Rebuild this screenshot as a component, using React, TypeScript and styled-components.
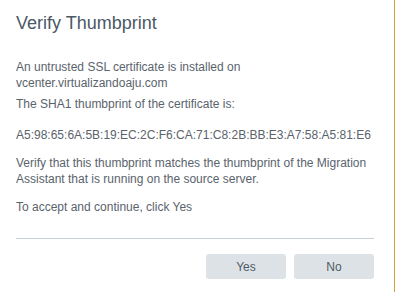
import React from "react";
import styled, { createGlobalStyle } from "styled-components";

const Global = createGlobalStyle`
  html, body { margin: 0; padding: 0; background: #ffffff; }
  body { font-family: "Liberation Sans", Arial, sans-serif; }
`;

const Dialog = styled.div`
  box-sizing: border-box;
  width: 395px;
  height: 292px;
  border-right: 1px solid #d2a03c;
  padding: 12px 20px 0 16px;
  display: flex;
  flex-direction: column;
  background: #fff;
`;

const Title = styled.h1`
  margin: 0;
  font-size: 18px;
  line-height: 22px;
  font-weight: normal;
  color: #4a5866;
`;

const Body = styled.div`
  margin-top: 25px;
  font-size: 12px;
  line-height: 16px;
  color: #5a636c;
`;

const Para = styled.p<{ $gap?: number }>`
  margin: 0 0 ${(p) => p.$gap ?? 12}px 0;
`;

const Divider = styled.hr`
  margin: 0;
  border: 0;
  border-top: 1px solid #c8d0d7;
`;

const Footer = styled.div`
  display: flex;
  justify-content: flex-end;
  gap: 8px;
  padding-top: 15px;
`;

const Button = styled.button`
  width: 80px;
  height: 25px;
  border: 0;
  border-radius: 3px;
  background: #dde2e6;
  color: #505b66;
  font-family: "Liberation Sans", Arial, sans-serif;
  font-size: 12px;
  padding: 0;
`;

export default function App() {
  return (
    <>
      <Global />
      <Dialog>
        <Title>Verify Thumbprint</Title>
        <Body>
          <Para $gap={5}>
            An untrusted SSL certificate is installed on
            <br />
            vcenter.virtualizandoaju.com
          </Para>
          <Para $gap={15}>The SHA1 thumbprint of the certificate is:</Para>
          <Para $gap={12}>A5:98:65:6A:5B:19:EC:2C:F6:CA:71:C8:2B:BB:E3:A7:58:A5:81:E6</Para>
          <Para $gap={12}>
            Verify that this thumbprint matches the thumbprint of the Migration
            Assistant that is running on the source server.
          </Para>
          <Para $gap={23}>To accept and continue, click Yes</Para>
        </Body>
        <Divider />
        <Footer>
          <Button>Yes</Button>
          <Button>No</Button>
        </Footer>
      </Dialog>
    </>
  );
}
